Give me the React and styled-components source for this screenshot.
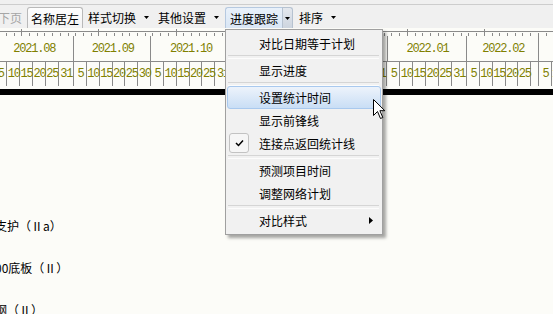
import React from 'react';
import styled, { createGlobalStyle } from 'styled-components';

const CJK = `"Noto Sans CJK SC", "Noto Sans", sans-serif`;
const MONO = `"Liberation Mono", "DejaVu Sans Mono", monospace`;

const DAY = 2.57;
const ORIGIN = -5.67;

const GlobalStyle = createGlobalStyle`
  html, body { margin: 0; padding: 0; background: #fcfcf8; }
  body { font-family: ${CJK}; font-size: 12px; color: #000; }
  * { box-sizing: border-box; }
`;

const Page = styled.div`
  position: relative;
  width: 553px;
  height: 314px;
  overflow: hidden;
  background: #fcfcf8;
  display: flex;
  flex-direction: column;
`;

const TopStrip = styled.div`
  flex: none;
  height: 5px;
  background: #f0f0f0;
  border-bottom: 1px solid #cdcdcd;
`;

const Toolbar = styled.div`
  flex: none;
  height: 23px;
  padding-top: 2px;
  background: #f0f0f0;
  display: flex;
  align-items: stretch;
`;

const ToolText = styled.div`
  flex: none;
  display: flex;
  align-items: center;
  justify-content: center;
  margin-left: ${(p) => p.$ml || 0}px;
  width: ${(p) => p.$w}px;
  color: ${(p) => (p.$disabled ? '#a6a6a6' : '#000')};
  white-space: nowrap;
  line-height: 21px;
`;

const TabButton = styled(ToolText)`
  border: 1px solid #b9b9b9;
  border-bottom: none;
  border-radius: 3px 3px 0 0;
  background: linear-gradient(#fefefe, #f3f3f3);
`;

const ActiveButton = styled(ToolText)`
  border: 1px solid #b6c9e0;
  border-right: none;
  border-bottom: none;
  border-radius: 3px 0 0 0;
  background: linear-gradient(#e9f1fa, #d9e6f5);
`;

const ArrowBox = styled.div`
  flex: none;
  width: 11px;
  margin-left: ${(p) => p.$ml || 0}px;
  display: flex;
  align-items: center;
  justify-content: center;
  ${(p) =>
    p.$active &&
    `
    border: 1px solid #b6c2d0;
    border-bottom: none;
    border-radius: 0 3px 0 0;
    background: linear-gradient(#e4e8ee, #cdd5df);
  `}
`;

const DownArrow = () => (
  <svg width="5" height="3" viewBox="0 0 5 3">
    <polygon points="0,0 5,0 2.5,3" fill="#000" />
  </svg>
);

const Chart = styled.div`
  flex: none;
  display: flex;
  flex-direction: column;
  background: #fcfcf8;
`;

const RulerSvg = styled.svg`
  display: block;
  flex: none;
`;

const Row = styled.div`
  flex: none;
  display: flex;
  height: ${(p) => p.$h}px;
  margin-left: ${ORIGIN}px;
  ${(p) => p.$bottom && 'border-bottom: 1px solid #8a8a8a;'}
`;

const Cell = styled.div`
  flex: none;
  height: 100%;
  border-right: 1px solid #8a8a8a;
  display: flex;
  align-items: center;
  justify-content: center;
  color: #808000;
  font-family: ${MONO};
  font-size: 12px;
  white-space: nowrap;
  overflow: visible;
`;

const Label = styled.span`
  display: inline-block;
  letter-spacing: -1.2px;
  margin-right: -1.2px;
`;

const Bar = styled.div`
  flex: none;
  height: 6px;
  margin-top: 3px;
  background: #000;
`;

const TaskList = styled.div`
  flex: 1;
  display: flex;
  flex-direction: column;
  padding-top: 110px;
  overflow: hidden;
`;

const TaskRow = styled.div`
  flex: none;
  height: 42px;
  line-height: 42px;
  margin-left: -5px;
  white-space: nowrap;
  font-size: 12px;
`;

const Menu = styled.div`
  position: absolute;
  left: 225px;
  top: 29px;
  width: 158px;
  padding: 2px 1px;
  background: #f1f1f1;
  border: 1px solid #a0a0a0;
  box-shadow: 3px 3px 3px rgba(0, 0, 0, 0.35);
  display: flex;
  flex-direction: column;
`;

const MenuItem = styled.div`
  position: relative;
  height: 23px;
  display: flex;
  align-items: center;
  justify-content: space-between;
  padding-left: 31px;
  padding-right: 7px;
  border: 1px solid transparent;
  border-radius: 3px;
  white-space: nowrap;
  ${(p) =>
    p.$active &&
    `
    background: linear-gradient(#edf3fb, #c9def5);
    border-color: #a9c9ee;
  `}
`;

const Separator = styled.div`
  height: 4px;
  display: flex;
  align-items: center;
  margin: 0 2px 0 1px;
  &::before {
    content: '';
    display: block;
    width: 100%;
    height: 2px;
    border-top: 1px solid #d5d5d5;
    border-bottom: 1px solid #fcfcfc;
  }
`;

const CheckBox = styled.div`
  position: absolute;
  left: 1px;
  top: 0;
  width: 20px;
  height: 20px;
  border: 1px solid #c2c2c2;
  border-radius: 3px;
  background: #f6f6f6;
  display: flex;
  align-items: center;
  justify-content: center;
`;

const Cursor = styled.svg`
  position: absolute;
  left: 373px;
  top: 99px;
`;

const months = [
  ['2021.08', 31],
  ['2021.09', 30],
  ['2021.10', 31],
  ['2021.11', 30],
  ['2021.12', 31],
  ['2022.01', 31],
  ['2022.02', 28],
  ['2022.03', 31],
];

const dayCells = [];
months.forEach(([m, len]) => {
  for (let d = 5; d <= 25; d += 5) dayCells.push({ key: m + d, days: 5, label: String(d) });
  const rest = len - 25;
  dayCells.push({ key: m + len, days: rest, label: rest >= 5 ? String(len) : '' });
});

const ticks = [];
for (let k = 0; k < 85; k++) {
  const day = 1.5 + 3 * k;
  const x = ORIGIN + day * DAY;
  if (x > 553) break;
  ticks.push({ x: Math.round(x) + 0.5, tall: k % 10 === 3 });
}

const menuItems = [
  { label: '对比日期等于计划' },
  'sep',
  { label: '显示进度' },
  'sep',
  { label: '设置统计时间', active: true },
  { label: '显示前锋线' },
  { label: '连接点返回统计线', checked: true },
  'sep',
  { label: '预测项目时间' },
  { label: '调整网络计划' },
  'sep',
  { label: '对比样式', sub: true },
];

export default function App() {
  return (
    <>
      <GlobalStyle />
      <Page>
        <TopStrip />
        <Toolbar>
          <ToolText $ml={-2} $w={24} $disabled>下页</ToolText>
          <TabButton $ml={5} $w={56}>名称居左</TabButton>
          <ToolText $ml={5} $w={48}>样式切换</ToolText>
          <ArrowBox $ml={5}><DownArrow /></ArrowBox>
          <ToolText $ml={6} $w={48}>其他设置</ToolText>
          <ArrowBox $ml={5}><DownArrow /></ArrowBox>
          <ActiveButton $ml={3} $w={57}>进度跟踪</ActiveButton>
          <ArrowBox $active><DownArrow /></ArrowBox>
          <ToolText $ml={6} $w={24}>排序</ToolText>
          <ArrowBox $ml={5}><DownArrow /></ArrowBox>
        </Toolbar>
        <Chart>
          <RulerSvg width="553" height="8">
            <line x1="0" y1="3.5" x2="553" y2="3.5" stroke="#8a8a8a" />
            {ticks.map((t) => (
              <line
                key={t.x}
                x1={t.x}
                x2={t.x}
                y1={t.tall ? 1 : 5}
                y2={8}
                stroke="#8a8a8a"
              />
            ))}
          </RulerSvg>
          <Row $h={26} $bottom>
            {months.map(([m, len]) => (
              <Cell key={m} style={{ width: len * DAY }}>
                <Label>{m}</Label>
              </Cell>
            ))}
          </Row>
          <Row $h={24}>
            {dayCells.map((c) => (
              <Cell key={c.key} style={{ width: c.days * DAY }}>
                <Label>{c.label}</Label>
              </Cell>
            ))}
          </Row>
          <Bar />
        </Chart>
        <TaskList>
          <TaskRow>支护（Ⅱa）</TaskRow>
          <TaskRow>00底板（Ⅱ）</TaskRow>
          <TaskRow>钢（Ⅱ）</TaskRow>
        </TaskList>

        <Menu>
          {menuItems.map((it, i) =>
            it === 'sep' ? (
              <Separator key={i} />
            ) : (
              <MenuItem key={i} $active={it.active}>
                {it.checked && (
                  <CheckBox>
                    <svg width="9" height="8" viewBox="0 0 9 8">
                      <path d="M1 4 L3.5 6.5 L8 1.5" stroke="#000" strokeWidth="1.5" fill="none" />
                    </svg>
                  </CheckBox>
                )}
                <span>{it.label}</span>
                {it.sub && (
                  <svg width="4" height="7" viewBox="0 0 4 7">
                    <polygon points="0,0 4,3.5 0,7" fill="#000" />
                  </svg>
                )}
              </MenuItem>
            )
          )}
        </Menu>

        <Cursor width="13" height="21" viewBox="0 0 13 21">
          <path
            d="M0.5 0.5 L0.5 16.5 L4.5 12.5 L7.5 19.5 L9.8 18.5 L6.9 11.7 L11.8 11.7 Z"
            fill="#fff"
            stroke="#000"
            strokeWidth="1"
            strokeLinejoin="miter"
          />
        </Cursor>
      </Page>
    </>
  );
}
